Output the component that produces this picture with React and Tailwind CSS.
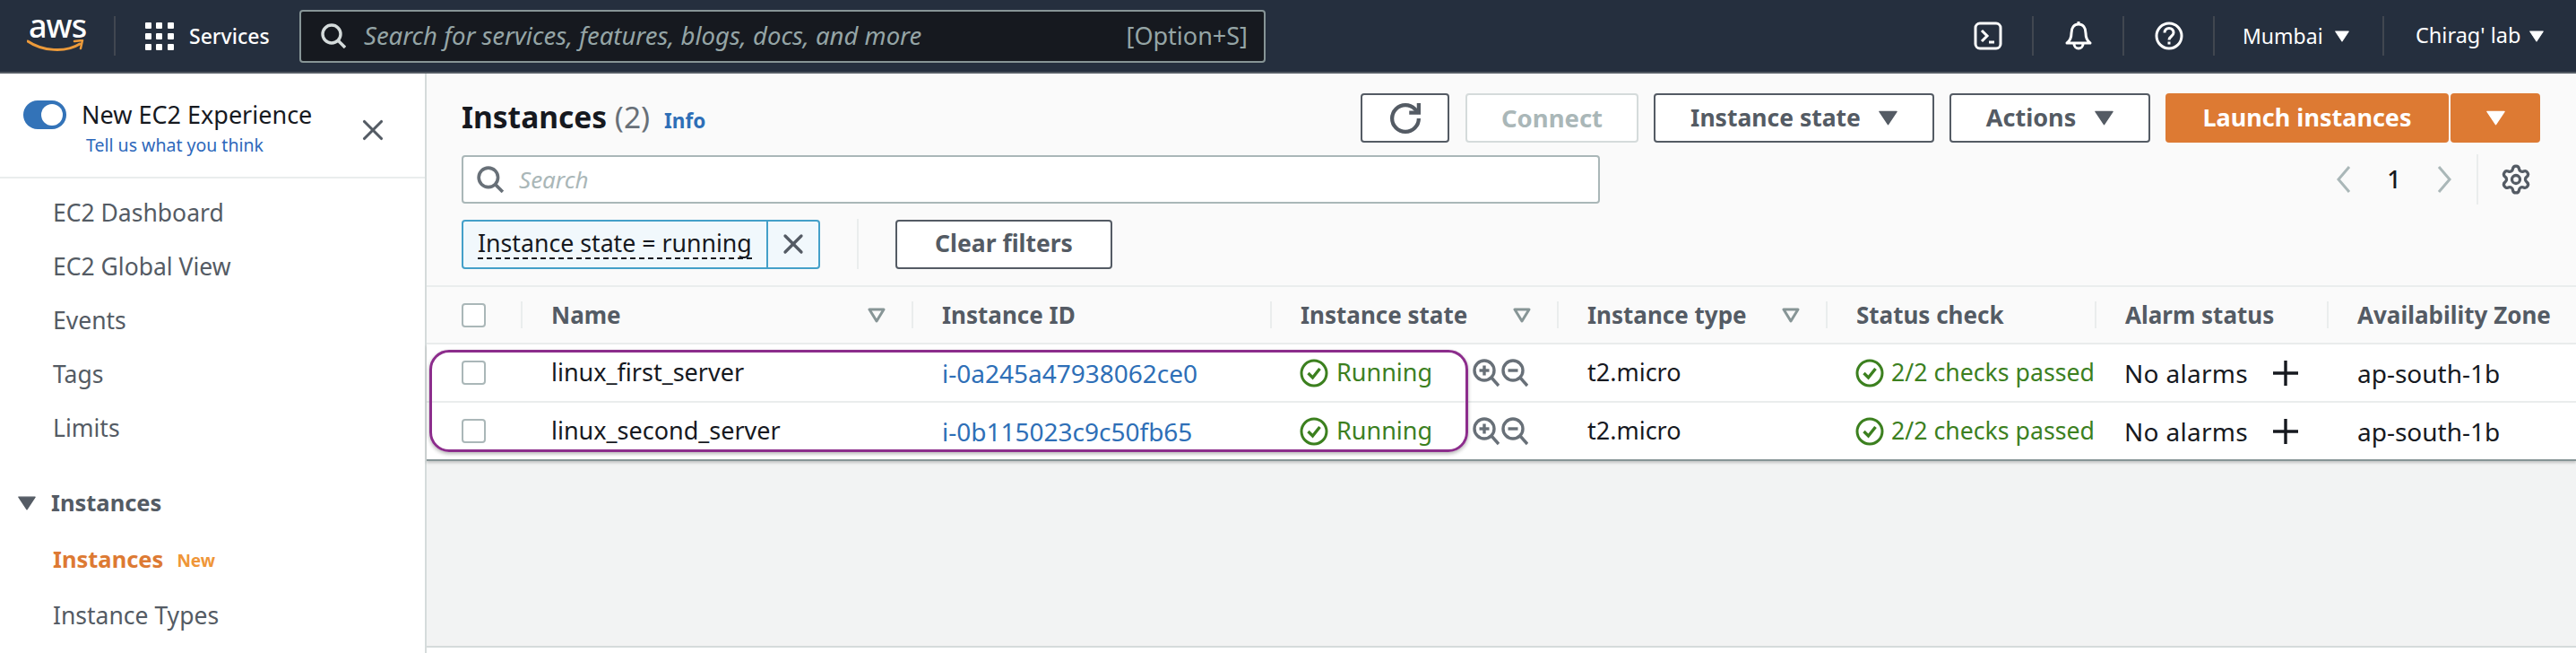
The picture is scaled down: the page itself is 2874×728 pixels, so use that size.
import { Settings, X } from "lucide-react";

const tableCols = "grid grid-cols-[105px_436px_400px_320px_300px_300px_259px_1fr]";

const instances = [
  { name: "linux_first_server", id: "i-0a245a47938062ce0" },
  { name: "linux_second_server", id: "i-0b115023c9c50fb65" },
];

const navTop = ["EC2 Dashboard", "EC2 Global View", "Events", "Tags", "Limits"];

function Caret({ className }) {
  return (
    <svg viewBox="0 0 22 17" className={className} fill="currentColor">
      <path d="M1 1h20L11 16z" stroke="currentColor" strokeWidth="1.5" strokeLinejoin="round" />
    </svg>
  );
}

function FilterCaret() {
  return (
    <svg viewBox="0 0 20 17" className="w-[20px] h-[17px] text-[#879596]" fill="none">
      <path d="M2 2h16L10 15z" stroke="currentColor" strokeWidth="3" strokeLinejoin="round" />
    </svg>
  );
}

function CheckCircle() {
  return (
    <svg viewBox="0 0 32 32" className="w-[32px] h-[32px] shrink-0" fill="none" stroke="currentColor">
      <circle cx="16" cy="16" r="14" strokeWidth="3" />
      <path d="M9.5 16l5 5 8-10" strokeWidth="3.4" />
    </svg>
  );
}

function ZoomIcon({ plus }) {
  return (
    <svg viewBox="0 0 30 32" className="w-[30px] h-[32px] text-[#687078]" fill="none" stroke="currentColor">
      <circle cx="13" cy="13" r="11" strokeWidth="3.4" />
      <path d="M21 21l8 9" strokeWidth="3.4" />
      <path d="M7.5 13h11" strokeWidth="3.4" />
      {plus && <path d="M13 7.5v11" strokeWidth="3.4" />}
    </svg>
  );
}

function SearchIcon({ className }) {
  return (
    <svg viewBox="0 0 28 28" className={className} fill="none" stroke="currentColor" strokeWidth="3.4">
      <circle cx="12" cy="12" r="10" />
      <path d="M19 19l8 8" />
    </svg>
  );
}

function TopSep() {
  return <div className="w-[2px] h-[44px] bg-[#414750] shrink-0" />;
}

function TopBar() {
  return (
    <header className="h-[82px] bg-[#252f3e] border-b-2 border-[#545b64] flex items-center text-white shrink-0">
      <div className="w-[127px] pl-[30px] flex flex-col shrink-0">
        <span className="text-[36px] leading-[26px] font-medium tracking-[-1px] mt-[-6px] pl-[2px]">aws</span>
        <svg viewBox="0 0 64 15" className="w-[64px] h-[15px] mt-[2px]" fill="none">
          <path d="M1 2c16 11 42 13 58 3" stroke="#ec9a3a" strokeWidth="3" strokeLinecap="round" />
          <path d="M53 2l9-1-2 9" stroke="#ec9a3a" strokeWidth="2.5" strokeLinecap="round" strokeLinejoin="round" />
        </svg>
      </div>
      <TopSep />
      <div className="ml-[33px] grid grid-cols-3 gap-[5px] w-[32px] shrink-0">
        {Array.from({ length: 9 }).map((_, i) => (
          <span key={i} className="w-[7px] h-[7px] bg-white rounded-[1px]" />
        ))}
      </div>
      <span className="ml-[17px] w-[123px] text-[23px] font-medium">Services</span>
      <div className="w-[1078px] h-[59px] bg-[#16191f] border-2 border-[#879596] rounded-[4px] flex items-center pl-[22px] pr-[18px] shrink-0">
        <SearchIcon className="w-[28px] h-[28px] text-[#d5dbdb] shrink-0" />
        <span className="ml-[20px] italic text-[27.5px] text-[#95a5a6]">Search for services, features, blogs, docs, and more</span>
        <span className="ml-auto text-[27px] text-[#95a5a6]">[Option+S]</span>
      </div>
      <svg viewBox="0 0 32 32" className="ml-[790px] w-[32px] h-[32px] shrink-0" fill="none" stroke="white" strokeWidth="3">
        <rect x="2" y="2" width="28" height="28" rx="5" />
        <path d="M9 10l6 6-6 6" />
        <path d="M17 23h6" />
      </svg>
      <div className="ml-[33px]"><TopSep /></div>
      <svg viewBox="0 0 32 34" className="ml-[34px] w-[32px] h-[34px] shrink-0" fill="none" stroke="white" strokeWidth="3" strokeLinejoin="round">
        <path d="M3 25c4-3 5-6 5-11 0-6 3-10 8-10s8 4 8 10c0 5 1 8 5 11z" />
        <path d="M16 1v3M11 26a5 5 0 0 0 10 0" />
      </svg>
      <div className="ml-[33px]"><TopSep /></div>
      <svg viewBox="0 0 32 32" className="ml-[34px] w-[32px] h-[32px] shrink-0" fill="none" stroke="white" strokeWidth="3">
        <circle cx="16" cy="16" r="14" />
        <path d="M11 12.500c0-3 2-5 5-5s5 2 5 5c0 4-5 4-5 8" />
        <path d="M16 22.500v3" />
      </svg>
      <div className="ml-[33px]"><TopSep /></div>
      <span className="ml-[31px] w-[95px] text-[23px]">Mumbai</span>
      <Caret className="ml-[8px] w-[16px] h-[13px]" />
      <div className="ml-[37px]"><TopSep /></div>
      <span className="ml-[35px] w-[120px] text-[23.5px] whitespace-nowrap">Chirag' lab</span>
      <Caret className="ml-[7px] w-[16px] h-[13px]" />
    </header>
  );
}

function Sidebar() {
  return (
    <aside className="w-[476px] border-r-2 border-[#d5dbdb] bg-white shrink-0 overflow-hidden">
      <div className="h-[117px] border-b-2 border-[#eaeded] flex pl-[26px] pr-[44px]">
        <div className="flex-1 pt-[30px]">
          <div className="flex items-center whitespace-nowrap">
            <div className="w-[48px] h-[32px] rounded-full bg-[#3373b8] flex items-center justify-end pr-[4px] shrink-0">
              <span className="w-[24px] h-[24px] rounded-full bg-white" />
            </div>
            <span className="ml-[17px] text-[27px] leading-[32px] text-[#16191f]">New EC2 Experience</span>
          </div>
          <p className="ml-[70px] mt-[4px] text-[19.5px] leading-[28px] text-[#2d68bb]">Tell us what you think</p>
        </div>
        <X className="mt-[44px] w-[38px] h-[38px] text-[#545b64] mr-[-5px]" strokeWidth={2} absoluteStrokeWidth={false} />
      </div>
      <nav className="pt-[9px] text-[26.5px] text-[#545b64]">
        {navTop.map((item) => (
          <div key={item} className="h-[60px] flex items-center pl-[59px]">{item}</div>
        ))}
        <div className="mt-[21px] h-[63px] flex items-center pl-[20px] font-bold text-[25.5px]">
          <Caret className="w-[20px] h-[16px]" />
          <span className="ml-[17px]">Instances</span>
        </div>
        <div className="h-[63px] flex items-center pl-[59px]">
          <span className="font-bold text-[25.5px] text-[#dd7a33]">Instances</span>
          <span className="ml-[15px] mt-[4px] text-[19px] font-bold text-[#ef9638]">New</span>
        </div>
        <div className="h-[63px] flex items-center pl-[59px]">Instance Types</div>
      </nav>
    </aside>
  );
}

function OutlineButton({ children, className }) {
  return (
    <button className={`h-[55px] bg-white border-2 border-[#545b64] rounded-[4px] flex items-center justify-center text-[26.5px] font-bold text-[#545b64] ${className}`}>
      {children}
    </button>
  );
}

function Toolbar() {
  return (
    <section className="h-[238px] bg-[#fafafa] border-b-2 border-[#eaeded] pl-[39px] pr-[40px] pt-[22px] shrink-0">
      <div className="flex items-center justify-between h-[55px]">
        <div className="flex items-baseline mt-[-3px]">
          <h1 className="text-[33.5px] font-bold text-[#16191f]">Instances <span className="font-normal text-[#687078]">(2)</span></h1>
          <a className="ml-[16px] text-[22.5px] font-bold text-[#2e6fb7]">Info</a>
        </div>
        <div className="flex items-center">
          <OutlineButton className="w-[99px]">
            <svg viewBox="0 0 16 16" className="w-[34px] h-[34px]" fill="none" stroke="currentColor" strokeWidth="2">
              <path d="M10 5h5V0" />
              <path d="M15 8a6.990 6.990 0 0 1-14 0C1 4.130 4.130 1 8 1c1.930 0 3.680.78 4.950 2.050L15 5" />
            </svg>
          </OutlineButton>
          <button className="ml-[18px] w-[193px] h-[55px] bg-white border-2 border-[#d5dbdb] rounded-[4px] text-[27.5px] font-bold text-[#aab7b8]">Connect</button>
          <OutlineButton className="ml-[17px] w-[313px]">
            <span>Instance state</span>
            <Caret className="ml-[20px] w-[21px] h-[17px]" />
          </OutlineButton>
          <OutlineButton className="ml-[17px] w-[224px]">
            <span className="text-[27px]">Actions</span>
            <Caret className="ml-[21px] w-[21px] h-[17px]" />
          </OutlineButton>
          <button className="ml-[17px] w-[316px] h-[55px] bg-[#dd7a33] rounded-[4px] text-[27px] font-bold text-white">Launch instances</button>
          <button className="ml-[2px] w-[100px] h-[55px] bg-[#dd7a33] rounded-[4px] flex items-center justify-center text-white">
            <Caret className="w-[21px] h-[17px]" />
          </button>
        </div>
      </div>
      <div className="mt-[14px] h-[54px] flex items-center">
        <div className="w-[1270px] h-[54px] bg-white border-2 border-[#aab7b8] rounded-[4px] flex items-center pl-[15px]">
          <SearchIcon className="w-[30px] h-[30px] text-[#687078]" />
          <span className="ml-[17px] italic text-[26px] text-[#aab7b8]">Search</span>
        </div>
        <div className="ml-auto mr-[9px] flex items-center">
          <svg viewBox="0 0 20 30" className="w-[20px] h-[30px] mx-[18px] text-[#aab7b8]" fill="none" stroke="currentColor" strokeWidth="3">
            <path d="M16 1L4 15l12 14" />
          </svg>
          <span className="w-[56px] text-center text-[27px] font-medium text-[#16191f]">1</span>
          <svg viewBox="0 0 20 30" className="w-[20px] h-[30px] mx-[18px] text-[#aab7b8]" fill="none" stroke="currentColor" strokeWidth="3">
            <path d="M4 1l12 14L4 29" />
          </svg>
          <div className="ml-[8px] w-[2px] h-[56px] bg-[#eaeded]" />
          <Settings className="ml-[24px] w-[36px] h-[36px] text-[#545b64]" strokeWidth={2.2} />
        </div>
      </div>
      <div className="mt-[17px] h-[56px] flex items-center">
        <div className="w-[400px] h-[55px] bg-[#f1f8fc] border-2 border-[#44a0c9] rounded-[4px] flex items-center">
          <div className="w-[338px] pl-[16px] shrink-0">
            <span className="block w-[306px] text-[26.7px] leading-[32px] text-[#16191f] whitespace-nowrap border-b-2 border-dashed border-[#16191f]">Instance state = running</span>
          </div>
          <div className="h-full border-l-2 border-[#44a0c9] flex-1 flex items-center justify-center">
            <X className="w-[36px] h-[36px] text-[#545b64]" strokeWidth={2.2} />
          </div>
        </div>
        <div className="ml-[41px] w-[2px] h-[56px] bg-[#eaeded]" />
        <OutlineButton className="ml-[41px] w-[242px]">Clear filters</OutlineButton>
      </div>
    </section>
  );
}

function HeadCell({ label, filter }) {
  return (
    <div className="h-full flex items-center">
      <div className="w-[2px] h-[30px] bg-[#eaeded] shrink-0" />
      <div className="flex-1 pl-[32px] pr-[29px] flex items-center justify-between whitespace-nowrap">
        <span>{label}</span>
        {filter && <FilterCaret />}
      </div>
    </div>
  );
}

function InstanceTable() {
  return (
    <section className="shrink-0">
      <div className={`${tableCols} h-[64px] bg-[#fafafa] border-b-2 border-[#eaeded] text-[26px] font-bold text-[#545b64]`}>
        <div className="flex items-center pl-[39px]">
          <span className="w-[27px] h-[27px] bg-white border-2 border-[#aab7b8] rounded-[4px]" />
        </div>
        <HeadCell label="Name" filter />
        <HeadCell label="Instance ID" />
        <HeadCell label="Instance state" filter />
        <HeadCell label="Instance type" filter />
        <HeadCell label="Status check" />
        <HeadCell label="Alarm status" />
        <HeadCell label="Availability Zone" />
      </div>
      <div className="relative shadow-[0_2px_3px_rgba(0,0,0,0.2)]">
        {instances.map((row, i) => (
          <div key={row.id} className={`${tableCols} h-[65px] bg-white text-[27px] text-[#16191f] whitespace-nowrap border-b-2 ${i === 0 ? "border-[#eaeded]" : "border-[#879596]"}`}>
            <div className="flex items-center pl-[39px]">
              <span className="w-[27px] h-[27px] bg-white border-2 border-[#aab7b8] rounded-[4px]" />
            </div>
            <div className="flex items-center pl-[34px]">{row.name}</div>
            <div className="flex items-center pl-[34px] text-[28px] text-[#2e6fb7]">{row.id}</div>
            <div className="flex items-center pl-[33px] text-[#3c801f]">
              <CheckCircle />
              <span className="ml-[9px] w-[152px]">Running</span>
              <ZoomIcon plus />
              <span className="ml-[2px]"><ZoomIcon /></span>
            </div>
            <div className="flex items-center pl-[34px]">t2.micro</div>
            <div className="flex items-center pl-[33px] text-[26.7px] text-[#3c801f] overflow-hidden">
              <CheckCircle />
              <span className="ml-[8px]">2/2 checks passed</span>
            </div>
            <div className="flex items-center pl-[33px] text-[28px] tracking-[0.3px]">
              <span className="w-[165px]">No alarms</span>
              <svg viewBox="0 0 30 30" className="w-[30px] h-[30px]" stroke="currentColor" strokeWidth="3.4">
                <path d="M15 1v28M1 15h28" />
              </svg>
            </div>
            <div className="flex items-center pl-[34px] text-[28px]">ap-south-1b</div>
          </div>
        ))}
        {/* purple annotation drawn over the two rows */}
        <div className="absolute left-[3px] top-[6px] w-[1159px] h-[114px] border-[3px] border-[#8c2d8c] rounded-[22px] shadow-[0_2px_4px_rgba(0,0,0,0.3)] pointer-events-none" />
      </div>
    </section>
  );
}

export default function App() {
  return (
    <div className="w-[2874px] h-[728px] flex flex-col overflow-hidden bg-white font-['Noto_Sans',sans-serif]">
      <TopBar />
      <div className="flex flex-1 min-h-0">
        <Sidebar />
        <main className="flex-1 min-w-0 flex flex-col">
          <Toolbar />
          <InstanceTable />
          <div className="flex-1 bg-[#f2f3f3]" />
          <div className="h-[8px] border-t-2 border-[#d5dbdb] bg-white shrink-0" />
        </main>
      </div>
    </div>
  );
}
